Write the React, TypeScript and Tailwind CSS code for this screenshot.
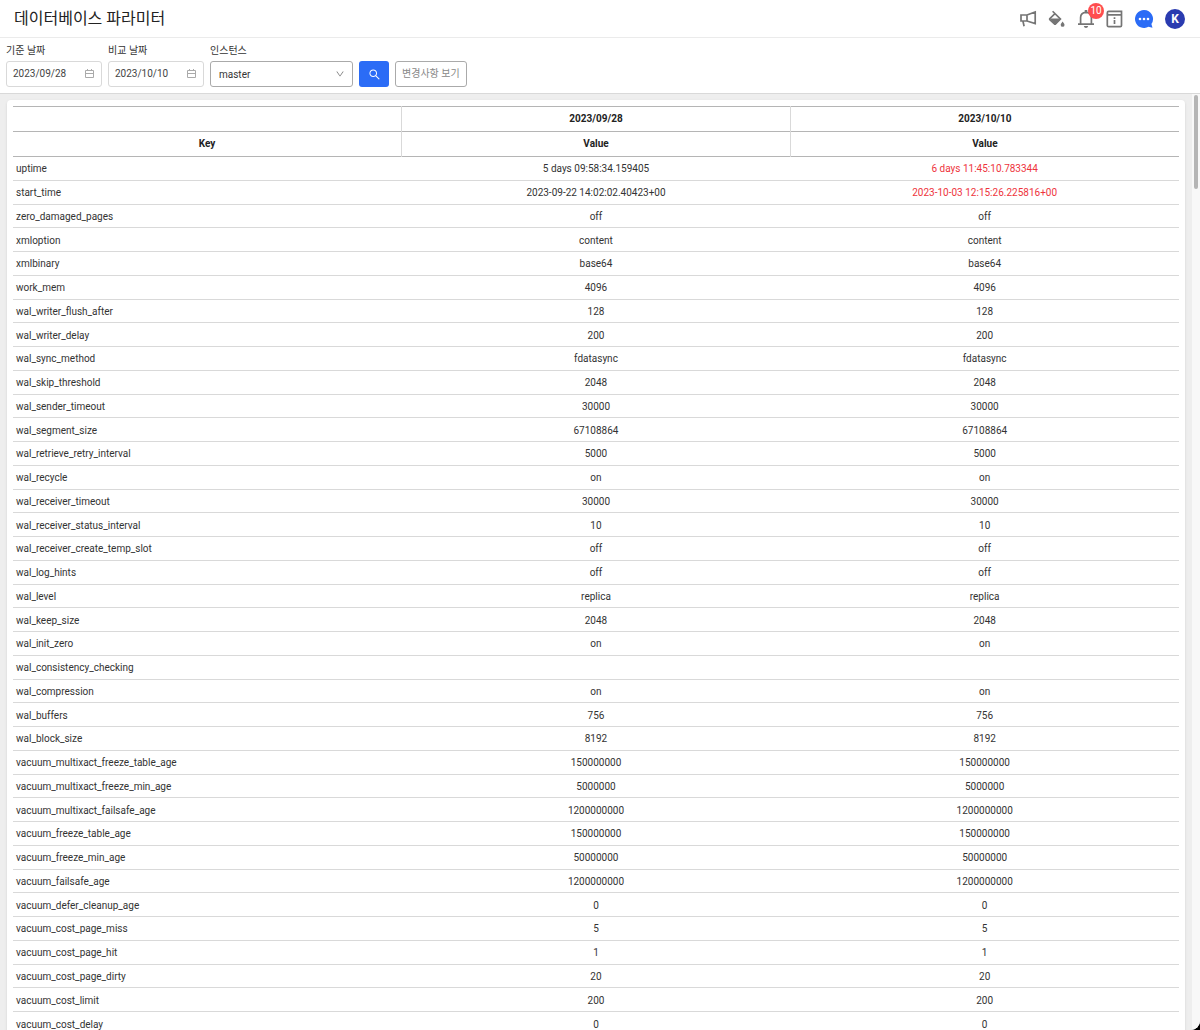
import { AiOutlineDown, AiOutlineSearch } from 'react-icons/ai';

type Row = [string, string, string?];

const rows: Row[] = [
  ['uptime', '5 days 09:58:34.159405', '6 days 11:45:10.783344'],
  ['start_time', '2023-09-22 14:02:02.40423+00', '2023-10-03 12:15:26.225816+00'],
  ['zero_damaged_pages', 'off'],
  ['xmloption', 'content'],
  ['xmlbinary', 'base64'],
  ['work_mem', '4096'],
  ['wal_writer_flush_after', '128'],
  ['wal_writer_delay', '200'],
  ['wal_sync_method', 'fdatasync'],
  ['wal_skip_threshold', '2048'],
  ['wal_sender_timeout', '30000'],
  ['wal_segment_size', '67108864'],
  ['wal_retrieve_retry_interval', '5000'],
  ['wal_recycle', 'on'],
  ['wal_receiver_timeout', '30000'],
  ['wal_receiver_status_interval', '10'],
  ['wal_receiver_create_temp_slot', 'off'],
  ['wal_log_hints', 'off'],
  ['wal_level', 'replica'],
  ['wal_keep_size', '2048'],
  ['wal_init_zero', 'on'],
  ['wal_consistency_checking', ''],
  ['wal_compression', 'on'],
  ['wal_buffers', '756'],
  ['wal_block_size', '8192'],
  ['vacuum_multixact_freeze_table_age', '150000000'],
  ['vacuum_multixact_freeze_min_age', '5000000'],
  ['vacuum_multixact_failsafe_age', '1200000000'],
  ['vacuum_freeze_table_age', '150000000'],
  ['vacuum_freeze_min_age', '50000000'],
  ['vacuum_failsafe_age', '1200000000'],
  ['vacuum_defer_cleanup_age', '0'],
  ['vacuum_cost_page_miss', '5'],
  ['vacuum_cost_page_hit', '1'],
  ['vacuum_cost_page_dirty', '20'],
  ['vacuum_cost_limit', '200'],
  ['vacuum_cost_delay', '0'],
];

function MegaphoneIcon() {
  return (
    <svg width="18" height="18" viewBox="0 0 18 18" fill="none" stroke="#757575" strokeWidth="1.7">
      <path d="M2 5H8L16.2 2V13.6L8 11H2ZM8 5V11M3.9 11L5.1 16.3" />
    </svg>
  );
}

function PaintIcon() {
  return (
    <svg width="18" height="18" viewBox="0 0 18 18">
      <path d="M4.6 1.2L12.5 9.1L7.6 14Q7 14.6 6.4 14L1.8 9.7Q1.3 9.1 1.8 8.6L7 3.6" fill="none" stroke="#757575" strokeWidth="1.6" />
      <path d="M1.5 8.6H13L7 15Z" fill="#757575" />
      <path d="M14.6 11.5Q16.5 13.9 16.5 14.9A1.9 1.9 0 0 1 12.7 14.9Q12.7 13.9 14.6 11.5Z" fill="#757575" />
    </svg>
  );
}

function BellIcon() {
  return (
    <svg width="18" height="20" viewBox="0 0 18 20">
      <path d="M1 15.2H17M3.6 15V8.6Q3.6 3.6 9 3.4Q14.4 3.6 14.4 8.6V15" fill="none" stroke="#757575" strokeWidth="1.7" />
      <path d="M7.7 1H10.3V4H7.7ZM6.8 17H11.2Q10.8 19 9 19Q7.2 19 6.8 17Z" fill="#757575" />
    </svg>
  );
}

function InfoBoxIcon() {
  return (
    <svg width="17" height="18" viewBox="0 0 17 18" fill="none" stroke="#757575" strokeWidth="1.7">
      <path d="M15.5 4.8V1.3H2.7Q1.3 1.3 1.3 2.9Q1.3 4.8 2.7 4.8H15.5V15.5Q15.5 16.7 14.3 16.7H2.7Q1.3 16.7 1.3 15.5V2.9" />
      <path d="M8.5 7.3V8.9M8.5 10V14" />
    </svg>
  );
}

function ChatIcon() {
  return (
    <svg width="20" height="20" viewBox="0 0 20 20">
      <path d="M10 1A9 9 0 1 0 14.5 17.8L18.5 18.8L17.4 15.1A9 9 0 0 0 10 1Z" fill="#2b6cf6" />
      <g fill="#fff">
        <circle cx="6" cy="10" r="1.3" />
        <circle cx="10" cy="10" r="1.3" />
        <circle cx="14" cy="10" r="1.3" />
      </g>
    </svg>
  );
}

function CalendarIcon() {
  return (
    <svg width="9" height="10" viewBox="0 0 9 10" fill="none" stroke="#aaa">
      <path d="M0.5 1.5H8.5V8.5H0.5ZM0.5 4.5H8.5M2.5 0V2M6.5 0V2" />
    </svg>
  );
}

function DateField({ id, label, value }: { id: string; label: string; value: string }) {
  return (
    <div className="flex flex-col gap-0.5">
      <label htmlFor={id} className="leading-4">{label}</label>
      <div className="flex h-[26px] w-24 items-center rounded-[3px] border border-[#d9d9d9] pr-[7px] pb-px pl-1.5">
        <input id={id} defaultValue={value} className="w-0 flex-1 bg-transparent text-[#444] outline-none" />
        <CalendarIcon />
      </div>
    </div>
  );
}

export default function App() {
  return (
    <div className="h-screen bg-black">
      <div className="flex h-full flex-col overflow-hidden rounded-br-[9px] bg-white font-['Roboto','Noto_Sans_CJK_KR',sans-serif] text-[10px] text-[#333]">
        <header className="flex h-[38px] shrink-0 items-center justify-between border-b border-[#ebebeb] pr-[15px] pl-3.5">
          <h1 className="text-[16px] leading-5 text-[#222]">데이터베이스 파라미터</h1>
          <nav className="flex items-center gap-[11px]">
            <button aria-label="공지"><MegaphoneIcon /></button>
            <button aria-label="테마"><PaintIcon /></button>
            <button aria-label="알림 10" className="relative">
              <BellIcon />
              <span className="absolute -top-1.5 left-[11px] flex size-4 items-center justify-center rounded-full bg-[#ff4d4f] text-white">10</span>
            </button>
            <button aria-label="정보"><InfoBoxIcon /></button>
            <button aria-label="채팅"><ChatIcon /></button>
            <button className="flex size-5 items-center justify-center rounded-full bg-[#2a3bb0] text-[12px] font-bold text-white">K</button>
          </nav>
        </header>

        <form className="flex h-14 shrink-0 items-start gap-1.5 border-b border-[#d9d9d9] px-1.5 pt-[5px]">
          <DateField id="base" label="기준 날짜" value="2023/09/28" />
          <DateField id="compare" label="비교 날짜" value="2023/10/10" />
          <div className="flex flex-col gap-0.5">
            <label htmlFor="instance" className="leading-4">인스턴스</label>
            <div className="relative">
              <select id="instance" className="block h-[26px] w-[143px] appearance-none rounded-[3px] border border-[#aaa] bg-white px-2 outline-none">
                <option>master</option>
              </select>
              <AiOutlineDown className="pointer-events-none absolute top-2 right-2 size-[10px] text-[#777]" />
            </div>
          </div>
          <button type="button" aria-label="검색" className="mt-[18px] flex h-[26px] w-[30px] items-center justify-center rounded-[3px] bg-[#2b6cf6] text-white">
            <AiOutlineSearch className="size-[13px]" />
          </button>
          <button type="button" className="mt-[18px] h-[26px] rounded-[3px] border border-[#aaa] px-1.5 pb-0.5 text-[#888]">변경사항 보기</button>
        </form>

        <div className="flex min-h-0 flex-1">
          <main className="min-w-0 flex-1 overflow-hidden bg-[#eee] px-[7px] pt-1.5">
            <section className="rounded-t bg-white px-1.5 pt-1.5 shadow-sm">
              <table className="h-[calc(100vh-100px)] w-full table-fixed border-collapse text-center">
                <thead className="text-[#222]">
                  <tr className="border-y border-[#b5b5b5]">
                    <th className="p-0" />
                    <th className="border-l border-[#d9d9d9] p-0 leading-6">2023/09/28</th>
                    <th className="border-l border-[#d9d9d9] p-0 leading-6">2023/10/10</th>
                  </tr>
                  <tr className="border-b border-[#b5b5b5]">
                    <th className="p-0 leading-6">Key</th>
                    <th className="border-l border-[#d9d9d9] p-0 leading-6">Value</th>
                    <th className="border-l border-[#d9d9d9] p-0 leading-6">Value</th>
                  </tr>
                </thead>
                <tbody>
                  {rows.map(([key, base, compare]) => (
                    <tr key={key} className="border-b border-[#d9d9d9]">
                      <td className="px-[3px] pt-0.5 pb-0 text-left leading-5">{key}</td>
                      <td className="px-0 pt-0.5 pb-0 leading-5">{base}</td>
                      <td className={compare ? 'px-0 pt-0.5 pb-0 leading-5 text-[#ee343c]' : 'px-0 pt-0.5 pb-0 leading-5'}>
                        {compare ?? base}
                      </td>
                    </tr>
                  ))}
                </tbody>
              </table>
            </section>
          </main>
          <div className="w-2 bg-[#f8f8f8] px-0.5 pt-px">
            <div className="h-[10%] rounded-full bg-[#b5b5b5]" />
          </div>
        </div>
      </div>
    </div>
  );
}
